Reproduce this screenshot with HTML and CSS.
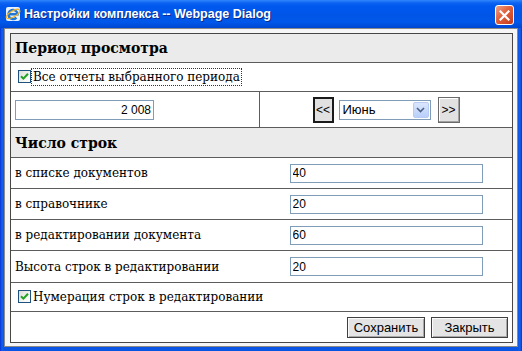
FILE: index.html
```html
<!DOCTYPE html>
<html lang="ru">
<head>
    <meta charset="UTF-8">
    <title>Настройки комплекса -- Webpage Dialog</title>
    <link rel="stylesheet" href="styles.css">
</head>
<body>
    <div class="window">
        <div class="titlebar">
            <svg class="app-icon" width="16" height="16" viewBox="0 0 16 16">
                <rect x="1" y="1" width="14" height="14" rx="2" fill="#e8f1ff"/>
                <path d="M3.5 8.2 H12.6 A4.6 4.6 0 1 0 11.4 11.6" fill="none" stroke="#1f78d6" stroke-width="2.4"/>
                <ellipse cx="8" cy="8" rx="7.6" ry="3" transform="rotate(-30 8 8)" fill="none" stroke="#f2b12a" stroke-width="1.2"/>
            </svg>
            <span class="title">Настройки комплекса -- Webpage Dialog</span>
            <span class="close-btn">
                <svg width="11" height="11" viewBox="0 0 11 11">
                    <path d="M1.5 1.5 L9.5 9.5 M9.5 1.5 L1.5 9.5" stroke="#fff" stroke-width="2.2" stroke-linecap="square"/>
                </svg>
            </span>
        </div>

        <div class="client">
            <div class="panel">
                <div class="row head row-period">Период просмотра</div>

                <div class="row check-row row-all">
                    <span class="check">
                        <svg width="9" height="9" viewBox="0 0 9 9"><path d="M1 4.2 L3.4 6.6 L8 1.8" fill="none" stroke="#21a121" stroke-width="2"/></svg>
                    </span>
                    <span class="check-text focused">Все отчеты выбранного периода</span>
                </div>

                <div class="row row-year">
                    <div class="cell cell-left divided">
                        <input class="field field-year" type="text" value="2 008">
                    </div>
                    <div class="cell cell-right">
                        <button class="nav-btn nav-default">&lt;&lt;</button>
                        <span class="select">
                            <span class="select-text">Июнь</span>
                            <span class="select-drop">
                                <svg width="9" height="6" viewBox="0 0 9 6"><path d="M1 1 L4.5 4.5 L8 1" fill="none" stroke="#4d6185" stroke-width="1.6"/></svg>
                            </span>
                        </span>
                        <button class="nav-btn nav-next">&gt;&gt;</button>
                    </div>
                </div>

                <div class="row head row-count">Число строк</div>

                <div class="row row-list">
                    <div class="cell cell-left">в списке документов</div>
                    <div class="cell cell-right"><input class="field field-num" type="text" value="40"></div>
                </div>

                <div class="row row-ref">
                    <div class="cell cell-left">в справочнике</div>
                    <div class="cell cell-right"><input class="field field-num" type="text" value="20"></div>
                </div>

                <div class="row row-edit">
                    <div class="cell cell-left">в редактировании документа</div>
                    <div class="cell cell-right"><input class="field field-num" type="text" value="60"></div>
                </div>

                <div class="row row-height">
                    <div class="cell cell-left">Высота строк в редактировании</div>
                    <div class="cell cell-right"><input class="field field-num" type="text" value="20"></div>
                </div>

                <div class="row check-row row-numbers">
                    <span class="check">
                        <svg width="9" height="9" viewBox="0 0 9 9"><path d="M1 4.2 L3.4 6.6 L8 1.8" fill="none" stroke="#21a121" stroke-width="2"/></svg>
                    </span>
                    <span class="check-text">Нумерация строк в редактировании</span>
                </div>

                <div class="row actions">
                    <button class="btn btn-save">Сохранить</button>
                    <button class="btn btn-close">Закрыть</button>
                </div>
            </div>
        </div>
    </div>
</body>
</html>
```

FILE: styles.css
```css
body {
    margin: 0;
    background-color: #0b4bdc;
    font-family: "DejaVu Serif", serif;
    font-size: 12px;
    color: #000;
}
.window {
    width: 522px;
    height: 351px;
    display: flex;
    flex-direction: column;
    background: linear-gradient(90deg, #0831d9 0, #1561ea 2px, #0b55e4 4px, #0b55e4 518px, #1561ea 520px, #0831d9 522px);
}
.titlebar {
    height: 28px;
    display: flex;
    align-items: center;
    padding: 0 8px 0 5px;
    box-sizing: border-box;
    background: linear-gradient(#2f86fb 0, #0c63f2 3px, #0058ee 6px, #0055e6 16px, #0058ea 22px, #0047d2 28px);
    color: #fff;
}
.app-icon {
    flex: none;
    margin-right: 3px;
}
.title {
    flex: 1;
    font-family: "Liberation Sans", sans-serif;
    font-weight: bold;
    font-size: 12.5px;
    text-shadow: 1px 1px 0 #0a2a8c;
}
.close-btn {
    width: 19px;
    height: 20px;
    display: flex;
    align-items: center;
    justify-content: center;
    align-self: flex-start;
    margin-top: 5px;
    box-sizing: border-box;
    border: 1px solid #fff;
    border-radius: 3px;
    background: linear-gradient(135deg, #f0a086 0, #e2603c 45%, #c53a1b 100%);
}
.client {
    flex: 1;
    margin: 0 4px 4px;
    padding: 4px 4px 3px 5px;
    border: 1px solid #8a8a8a;
    background-color: #f6f6f6;
}
.panel {
    border: 1px solid #474747;
    background-color: #fff;
    display: flex;
    flex-direction: column;
}
.row {
    display: flex;
    align-items: center;
    box-sizing: border-box;
    border-bottom: 1px solid #5c5c5c;
}
.head {
    background-color: #ebebeb;
    font-weight: bold;
    font-size: 14px;
    padding-left: 4px;
}
.row-period { height: 29px; }
.row-all { height: 29px; }
.row-year { height: 36px; align-items: stretch; }
.row-count { height: 30px; }
.row-list { height: 31px; }
.row-ref { height: 31px; }
.row-edit { height: 31px; }
.row-height { height: 32px; }
.row-numbers { height: 29px; }
.actions {
    height: 30px;
    border-bottom: none;
    justify-content: flex-end;
    gap: 6px;
    padding-right: 4px;
}
.cell {
    display: flex;
    align-items: center;
}
.cell-left {
    width: 249px;
    box-sizing: border-box;
    padding-left: 4px;
}
.divided {
    border-right: 1px solid #5c5c5c;
}
.cell-right {
    flex: 1;
    justify-content: center;
}
.check-row {
    padding-left: 7px;
}
.check {
    width: 13px;
    height: 13px;
    box-sizing: border-box;
    border: 1px solid #1c5180;
    background: linear-gradient(135deg, #dcdcd7 0, #f4f4f0 60%, #fff 100%);
    display: flex;
    align-items: center;
    justify-content: center;
    margin-top: -1px;
}
.check-text {
    margin-left: 1px;
    padding: 1px 1px 1px 1px;
}
.focused {
    outline: 1px dotted #333;
    outline-offset: 0;
}
.field {
    font-family: "Liberation Sans", sans-serif;
    font-size: 12px;
    color: #000;
    height: 20px;
    box-sizing: border-box;
    border: 1px solid #7f9db9;
    padding: 0 2px;
    margin: 0;
    background-color: #fff;
    outline: none;
}
.field-year {
    width: 139px;
    text-align: right;
}
.field-num {
    width: 193px;
    height: 19px;
}
.nav-btn {
    font-family: "Liberation Sans", sans-serif;
    font-size: 12px;
    height: 26px;
    padding: 0;
    margin: 0;
    box-sizing: border-box;
    background-color: #e1e1e1;
    color: #000;
}
.nav-default {
    width: 21px;
    border: 2px solid #1a1a1a;
    margin-right: 5px;
}
.nav-next {
    width: 22px;
    border: 1px solid #6a6a6a;
    box-shadow: inset -1px -1px 0 #a0a0a0, inset 1px 1px 0 #fff;
    margin-left: 7px;
}
.cell-right .nav-btn,
.cell-right .select {
    align-self: center;
}
.select {
    width: 92px;
    height: 20px;
    box-sizing: border-box;
    border: 1px solid #7f9db9;
    display: flex;
    align-items: center;
    background-color: #fff;
    font-family: "Liberation Sans", sans-serif;
    font-size: 13px;
}
.select-text {
    flex: 1;
    padding-left: 3px;
}
.select-drop {
    width: 16px;
    height: 16px;
    margin-right: 1px;
    box-sizing: border-box;
    border: 1px solid #b7cbf3;
    border-radius: 2px;
    background: linear-gradient(#dbe6fd, #b9cffa);
    display: flex;
    align-items: center;
    justify-content: center;
}
.btn {
    font-family: "Liberation Sans", sans-serif;
    font-size: 13px;
    height: 21px;
    padding: 0;
    margin: 0;
    box-sizing: border-box;
    border: 1px solid #404040;
    background-color: #e4e4e4;
    box-shadow: inset 1px 1px 0 #fafafa, inset -1px -1px 0 #a8a8a8;
    color: #000;
}
.btn-save {
    width: 78px;
}
.btn-close {
    width: 77px;
}
```
